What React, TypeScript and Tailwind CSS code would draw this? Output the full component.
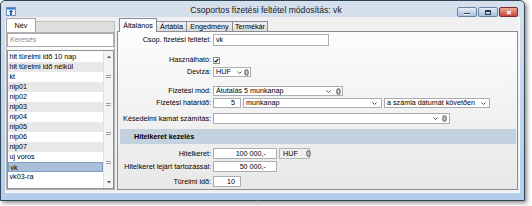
import React from "react";

const items = [
  "hlt türelmi idő 10 nap",
  "hlt türelmi idő nélkül",
  "kt",
  "nip01",
  "nip02",
  "nip03",
  "nip04",
  "nip05",
  "nip06",
  "nip07",
  "uj voros",
  "vk",
  "vk03-ra",
];

const tabs = [
  { name: "Általános", w: "w-[38px]" },
  { name: "Ártábla", w: "w-[30px]" },
  { name: "Engedmény", w: "w-[46px]" },
  { name: "Termékár", w: "w-[35px]" },
];

function Chevron() {
  return (
    <svg width="5" height="3" viewBox="0 0 5 3" className="shrink-0">
      <path d="M0.5 0.5 L2.5 2.5 L4.5 0.5" fill="none" stroke="#3c3c3c" strokeWidth="0.9" />
    </svg>
  );
}

// the little grey "lookup" glyph at the end of some fields
function Lookup() {
  return (
    <svg width="5" height="7" viewBox="0 0 5 7" className="shrink-0">
      <ellipse cx="2.5" cy="3.5" rx="1.7" ry="2.7" fill="#d0d0d0" stroke="#6a6a6a" strokeWidth="1.1" />
    </svg>
  );
}

function Combo({
  className,
  text,
  icon = true,
  gap = "gap-[4px]",
}: {
  className: string;
  text: string;
  icon?: boolean;
  gap?: string;
}) {
  return (
    <div className={`flex items-center bg-white border border-[#abadb3] pl-[2px] ${gap} ${className}`}>
      <span className="flex-1 whitespace-nowrap">{text}</span>
      <Chevron />
      {icon && <Lookup />}
    </div>
  );
}

function Input({ className, value }: { className: string; value: string }) {
  return (
    <div className={`flex items-center bg-white border border-[#abadb3] whitespace-nowrap ${className}`}>
      {value}
    </div>
  );
}

function Row({
  label,
  className,
  children,
}: {
  label: string;
  className: string;
  children: React.ReactNode;
}) {
  return (
    <div className={`flex items-center shrink-0 ${className}`}>
      <div className="w-[93px] text-right whitespace-nowrap">{label}</div>
      <div className="ml-[2px] flex items-center h-full gap-[2px]">{children}</div>
    </div>
  );
}

function GripMark() {
  return (
    <svg width="5" height="3" viewBox="0 0 5 3" className="mx-auto">
      <path d="M0 0.5 H5 M0 2.5 H5" stroke="#8a8a8a" strokeWidth="0.8" />
    </svg>
  );
}

function TitleBar() {
  return (
    <div className="grid grid-cols-[1fr_auto_1fr] h-[16px] shrink-0">
      <div className="self-start mt-[6px] ml-[5px]">
        <svg width="10" height="9" viewBox="0 0 10 9">
          <rect x="0.5" y="0.5" width="9" height="8" fill="#f4f8fc" stroke="#6f8fb8" />
          <rect x="1" y="1" width="8" height="1.5" fill="#3a78d0" />
          <path d="M5 2.5 L7.5 5 H6 V8 H4 V5 H2.5 Z" fill="#2b66c2" />
        </svg>
      </div>
      <div className="self-center pt-[3px] pl-[7px] text-[8.6px] text-[#1b1b1b] whitespace-nowrap">
        Csoportos fizetési feltétel módosítás: vk
      </div>
      <div className="self-end justify-self-end mr-[6px] flex gap-[1px]">
        <div className="w-[20px] h-[10px] rounded-[2px] border border-[#6b84a6] bg-linear-to-b from-[#e4ecf6] to-[#a9bfdb] flex items-center justify-center">
          <div className="w-[6px] h-[2px] mt-[3px] bg-[#2c3e57] border-b border-white" />
        </div>
        <div className="w-[20px] h-[10px] rounded-[2px] border border-[#6b84a6] bg-linear-to-b from-[#e4ecf6] to-[#a9bfdb] flex items-center justify-center">
          <div className="w-[6px] h-[5px] border border-[#2c3e57] border-t-2" />
        </div>
        <div className="w-[19px] h-[10px] rounded-[2px] border border-[#7c2b24] bg-linear-to-b from-[#e9a99b] to-[#c4443a] flex items-center justify-center">
          <svg width="6" height="5" viewBox="0 0 6 5">
            <path d="M1 0.8 L5 4.2 M5 0.8 L1 4.2" stroke="#fff" strokeWidth="1.4" />
          </svg>
        </div>
      </div>
    </div>
  );
}

function LeftPanel() {
  return (
    <div className="w-[109px] flex flex-col">
      <div className="flex h-[14px] shrink-0">
        <div className="w-[30px] bg-white border border-b-0 border-[#a5a5a5] flex items-center justify-center">
          Név
        </div>
        <div className="flex-1 mt-[3px] bg-[#dedede] border-t border-r border-[#c2c2c2]" />
      </div>
      <div className="h-[158px] bg-[#fafafa] border border-[#b0b0b0] flex flex-col">
        <div className="h-[14px] bg-white border border-[#abadb3] flex items-center pl-[2px] italic text-[#8e8e8e]">
          Keresés
        </div>
        <div className="mt-[3px] h-[140px] bg-white border border-[#8d9299] flex">
          <div className="flex-1 pt-[1px] flex flex-col">
            {items.map((it, i) => (
              <div
                key={it}
                className={`h-[10px] leading-[10px] pl-[1.5px] whitespace-nowrap ${
                  i === 11
                    ? "bg-[#a9bfda] border border-[#7f9cc2] leading-[8px]"
                    : i % 2 === 1
                    ? "bg-[#e8e8e8]"
                    : "bg-white"
                }`}
              >
                {it}
              </div>
            ))}
          </div>
          <div className="w-[10px] bg-[#f4f4f4] border-l border-[#e0e0e0] flex flex-col">
            <div className="h-[12px] flex items-center justify-center">
              <svg width="4" height="3" viewBox="0 0 4 3">
                <path d="M0 3 L2 0.5 L4 3 Z" fill="#555" />
              </svg>
            </div>
            <div className="mt-[12px]">
              <GripMark />
            </div>
            <div className="mt-[25px]">
              <GripMark />
            </div>
            <div className="mt-[26px]">
              <GripMark />
            </div>
            <div className="mt-[26px]">
              <GripMark />
            </div>
            <div className="flex-1" />
            <div className="h-[12px] flex items-center justify-center">
              <svg width="4" height="3" viewBox="0 0 4 3">
                <path d="M0 0 L2 2.5 L4 0 Z" fill="#555" />
              </svg>
            </div>
          </div>
        </div>
      </div>
    </div>
  );
}

function RightPanel() {
  return (
    <div className="ml-[2px] w-[402px] flex flex-col">
      <div className="flex items-end h-[13px] pl-[2px] shrink-0 relative z-10">
        {tabs.map((t, i) =>
          i === 0 ? (
            <div
              key={t.name}
              className={`${t.w} h-[14px] -mb-px bg-[#fcfcfc] border border-b-0 border-[#898c95] flex items-center justify-center whitespace-nowrap`}
            >
              {t.name}
            </div>
          ) : (
            <div
              key={t.name}
              className={`${t.w} h-[10px] bg-linear-to-b from-[#f2f2f2] to-[#dadada] border border-l-0 border-b-0 border-[#8c8e94] flex items-center justify-center whitespace-nowrap`}
            >
              {t.name}
            </div>
          )
        )}
      </div>
      <div className="h-[159px] mr-[1px] border border-[#898c95] bg-linear-to-b from-[#fcfcfc] to-[#e8e8e8] flex flex-col">
        <Row label="Csop. fizetési feltétel:" className="mt-[2px] h-[12px]">
          <Input className="w-[116px] h-[12px] pl-[2px]" value="vk" />
        </Row>
        <Row label="Használható:" className="mt-[10px] h-[8px]">
          <div className="w-[7px] h-[7px] bg-white border border-[#8e8f8f] flex items-center justify-center">
            <svg width="5" height="5" viewBox="0 0 5 5">
              <path d="M0.6 2.6 L1.9 3.9 L4.4 0.8" fill="none" stroke="#111" strokeWidth="1.1" />
            </svg>
          </div>
        </Row>
        <Row label="Deviza:" className="mt-[3px] h-[10px]">
          <Combo className="w-[38px] h-[10px] pr-[1px]" gap="gap-[2px]" text="HUF" />
        </Row>
        <Row label="Fizetési mód:" className="mt-[9px] h-[10px]">
          <Combo className="w-[130px] h-[10px] pr-[1px]" gap="gap-[5px]" text="Átutalás 5 munkanap" />
        </Row>
        <Row label="Fizetési határidő:" className="mt-[2px] h-[10px]">
          <Input className="w-[28px] h-[10px] justify-end pr-[5px]" value="5" />
          <Combo className="w-[139px] h-[10px] pr-[4px]" icon={false} text="munkanap" />
          <Combo className="w-[106px] h-[10px] pr-[3px]" icon={false} text="a számla dátumát követően" />
        </Row>
        <Row label="Késedelmi kamat számítás:" className="mt-[5px] h-[11px]">
          <Combo className="w-[237px] h-[11px] pr-[2px]" gap="gap-[4px]" text="" />
        </Row>
        <div className="mt-[5px] ml-[2px] mr-[1px] h-[15px] shrink-0 bg-[#c4d1de] flex items-center pl-[14px] font-bold">
          Hitelkeret kezelés
        </div>
        <Row label="Hitelkeret:" className="mt-[4px] h-[11px]">
          <Input className="w-[64px] h-[11px] justify-end pr-[10px]" value="100 000,-" />
          <div className="w-[31px] h-[11px] border border-[#b5b5b5] bg-[#efefef] flex items-center pl-[3px] pr-[1px] gap-[8px]">
            <span>HUF</span>
            <Lookup />
          </div>
        </Row>
        <Row label="Hitelkeret lejárt tartozással:" className="mt-[2px] h-[11px]">
          <Input className="w-[64px] h-[11px] justify-end pr-[10px]" value="50 000,-" />
        </Row>
        <Row label="Türelmi idő:" className="mt-[4px] h-[11px]">
          <Input className="w-[28px] h-[11px] justify-end pr-[5px]" value="10" />
        </Row>
      </div>
    </div>
  );
}

export default function App() {
  return (
    <div className="w-[532px] h-[206px] bg-white font-['Liberation_Sans',Arial,sans-serif] text-[7.2px] text-black leading-none">
      <div className="w-[525px] h-[201px] rounded-t-[5px] border border-[#2f4556] bg-linear-to-b from-[#d6e0ec] via-[#c3d5ea] to-[#b3cdea] shadow-[2px_2px_4px_rgba(0,0,0,0.45)] flex flex-col">
        <TitleBar />
        <div className="mx-[4px] h-[176px] bg-[#f0f0f0] border-r border-b border-[#f8fbff] flex pl-[1px] pt-[1px]">
          <LeftPanel />
          <RightPanel />
        </div>
      </div>
    </div>
  );
}
